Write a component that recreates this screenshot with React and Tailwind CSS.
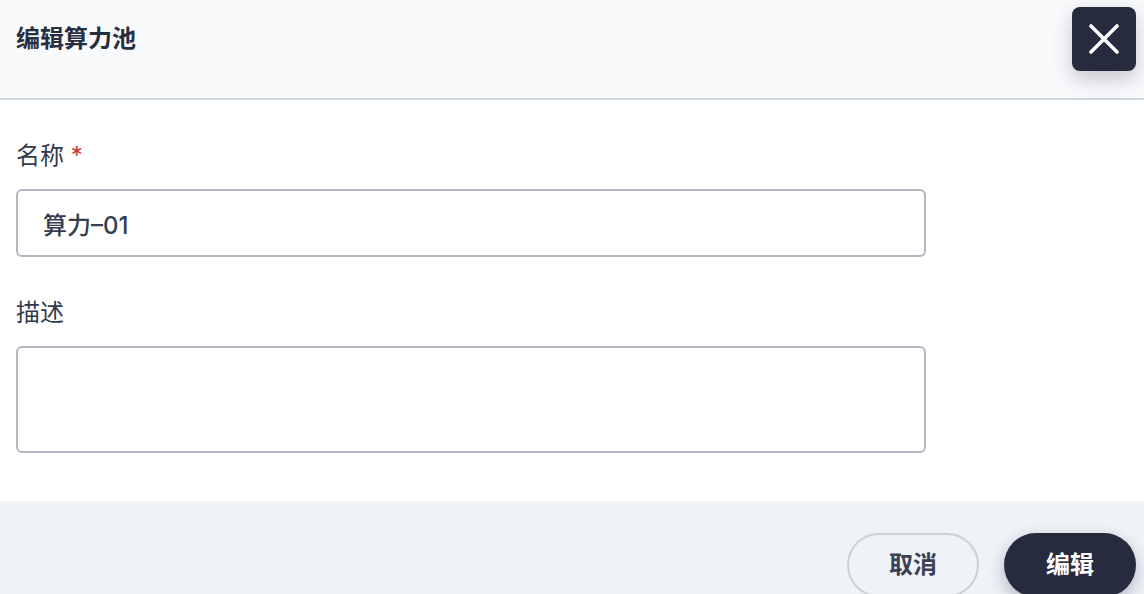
export default function App() {
  return (
    <div className="min-h-screen bg-white font-['Inter','Noto_Sans_CJK_SC',sans-serif] text-[#272e3f]">
      <header className="h-[100px] bg-[#f9fafc] border-b-2 border-[#cfd5dc] pt-[7px] pl-4 pr-2 flex items-start justify-between">
        <div className="h-16 flex items-center">
          <h1 className="text-[24px] leading-8 font-semibold">编辑算力池</h1>
        </div>
        <button className="w-16 h-16 rounded-lg bg-[#262c3e] flex items-center justify-center shadow-[0_8px_20px_rgba(38,44,62,0.25)]">
          <svg width="30" height="30" viewBox="0 0 30 30" fill="none">
            <path d="M2 2L28 28M28 2L2 28" stroke="white" strokeWidth="3.6" strokeLinecap="round" />
          </svg>
        </button>
      </header>

      <main className="px-4 pt-10 pb-12">
        <label className="block text-[24px] leading-8 text-[#333a4a]">
          名称 <span className="text-[#d0312d]">*</span>
        </label>
        <input
          className="mt-[17px] w-[910px] h-[68px] rounded-md border-2 border-[#b1b6c0] pl-[25px] text-[24px] font-medium text-[#363d4e] outline-none"
          defaultValue="算力–01"
        />

        <label className="block mt-10 text-[24px] leading-8 text-[#333a4a]">描述</label>
        <textarea className="mt-[17px] block w-[910px] h-[107px] rounded-md border-2 border-[#b1b6c0] resize-none outline-none" />
      </main>

      <footer className="bg-[#eff2f7] pt-8 pb-8 pr-2 flex justify-end gap-[25px]">
        <button className="w-[132px] h-16 rounded-full border-2 border-[#ccd0d6] text-[24px] font-bold text-[#3a4154]">
          取消
        </button>
        <button className="w-[132px] h-16 rounded-full bg-[#262c3e] text-[24px] font-bold text-white shadow-[0_6px_16px_rgba(38,44,62,0.3)]">
          编辑
        </button>
      </footer>
    </div>
  )
}
